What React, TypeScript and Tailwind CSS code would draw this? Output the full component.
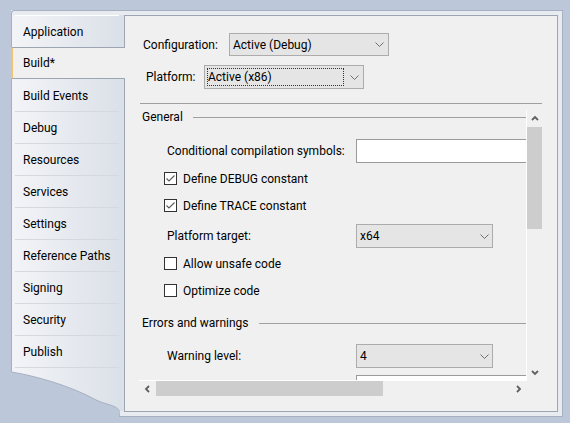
import React from 'react';

const tabs = [
  'Application',
  'Build*',
  'Build Events',
  'Debug',
  'Resources',
  'Services',
  'Settings',
  'Reference Paths',
  'Signing',
  'Security',
  'Publish',
];

function DropChevron() {
  return (
    <svg width="9" height="5" viewBox="0 0 9 5" className="shrink-0">
      <path d="M0.5 0.5 L4.5 4.5 L8.5 0.5" fill="none" stroke="#707070" strokeWidth="1" />
    </svg>
  );
}

function ArrowIcon({ dir }: { dir: 'up' | 'down' | 'left' | 'right' }) {
  const d = {
    up: 'M1 5 L4 2 L7 5',
    down: 'M1 2 L4 5 L7 2',
    left: 'M5 1 L2 4 L5 7',
    right: 'M2 1 L5 4 L2 7',
  }[dir];
  const vertical = dir === 'up' || dir === 'down';
  return (
    <svg
      width={vertical ? 8 : 7}
      height={vertical ? 7 : 8}
      viewBox={vertical ? '0 0 8 7' : '0 0 7 8'}
    >
      <path d={d} fill="none" stroke="#606060" strokeWidth="1.8" />
    </svg>
  );
}

function Check({ checked, label }: { checked?: boolean; label: string }) {
  return (
    <div className="flex h-[27px] items-center pl-[25px]">
      <div className="flex h-[13px] w-[13px] items-center justify-center border border-[#333333] bg-white">
        {checked && (
          <svg width="11" height="11" viewBox="0 0 11 11">
            <path d="M1.5 5.5 L4 8 L9.5 2.5" fill="none" stroke="#5a5a5a" strokeWidth="1.1" />
          </svg>
        )}
      </div>
      <span className="ml-[6px]">{label}</span>
    </div>
  );
}

function Header({ text }: { text: string }) {
  return (
    <div className="flex h-[14px] items-center pl-[3px] leading-[14px]">
      <span>{text}</span>
      <div className="ml-[10px] h-px flex-1 bg-[#A0A0A0]" />
    </div>
  );
}

function Field({ label, children }: { label: string; children: React.ReactNode }) {
  return (
    <div className="flex h-[24px] items-center pl-[28px]">
      <span className="w-[189px] shrink-0">{label}</span>
      {children}
    </div>
  );
}

function Combo({ value }: { value: string }) {
  return (
    <div className="flex h-[24px] w-[137px] shrink-0 items-center justify-between border border-[#ACACAC] bg-[#E5E5E5] pl-[3px] pr-[3px]">
      <span>{value}</span>
      <DropChevron />
    </div>
  );
}

function TabStrip() {
  return (
    <div className="flex w-[114px] flex-col">
      <div className="flex flex-col bg-gradient-to-r from-[#F3F4F7] to-[#DAE0E8]">
        <div className="h-[5px] rounded-tl-[3px] border-l border-t border-[#A6B0C0] bg-[#E8EBF0]" />
        {tabs.map((t, i) => {
          if (t === 'Build*') {
            return (
              <div
                key={t}
                className="flex h-[32px] items-center border-b border-l-2 border-t border-[#9DA5B2] border-l-[#F2C46D] bg-[#F0F0F0] pl-[10px]"
              >
                {t}
              </div>
            );
          }
          return (
            <div
              key={t}
              className="flex h-[32px] flex-col border-l border-r border-l-[#A6B0C0] border-r-[#9DA5B2]"
            >
              {i === 0 ? (
                <div className="ml-[3px] mr-[5px] h-px bg-white" />
              ) : i === 2 ? (
                <div className="h-px" />
              ) : (
                <div className="ml-[3px] mr-[5px] h-px bg-[#D4D9E0]" />
              )}
              <div className="flex flex-1 items-center pl-[11px]">{t}</div>
            </div>
          );
        })}
        <div className="h-px border-l border-r border-l-[#A6B0C0] border-r-[#9DA5B2]">
          <div className="ml-[3px] mr-[5px] h-px bg-[#D4D9E0]" />
        </div>
      </div>
      <svg width="114" height="49" viewBox="0 0 114 49" className="block">
        <defs>
          <linearGradient id="tabgrad" x1="0" x2="1" y1="0" y2="0">
            <stop offset="0" stopColor="#F3F4F7" />
            <stop offset="1" stopColor="#DAE0E8" />
          </linearGradient>
        </defs>
        <path
          d="M0 0 L0 4 C25 8 60 18 85 32 C96 37 104 37 107.5 42 L108 49 L114 49 L114 0 Z"
          fill="url(#tabgrad)"
        />
        <rect x="108" y="43" width="6" height="6" fill="#E8EBF0" />
        <path
          d="M0.5 0 L0.5 4 C25 8 60 18 85 32 C96 37 104 37 108 42 L108.5 49"
          fill="none"
          stroke="#A6B0C0"
          strokeWidth="1"
        />
        <line x1="108" y1="48.5" x2="114" y2="48.5" stroke="#A6B0C0" strokeWidth="1" />
        <line x1="113.5" y1="0" x2="113.5" y2="43.5" stroke="#9DA5B2" strokeWidth="1" />
        <line x1="113" y1="43.5" x2="114" y2="43.5" stroke="#9DA5B2" strokeWidth="1" />
      </svg>
    </div>
  );
}

function ScrollArea() {
  return (
    <div className="ml-[14px] mt-[6px] flex w-[403px] flex-col">
      <div className="flex h-[271px]">
        <div className="flex h-[271px] w-[388px] flex-col overflow-hidden border-b border-r border-white">
          <Header text="General" />
          <div className="mt-[15px]">
            <Field label="Conditional compilation symbols:">
              <div className="h-[24px] w-[200px] shrink-0 border border-[#9A9A9A] bg-white" />
            </Field>
          </div>
          <div className="mt-[2px]">
            <Check checked label="Define DEBUG constant" />
            <Check checked label="Define TRACE constant" />
          </div>
          <div className="mt-[5px]">
            <Field label="Platform target:">
              <Combo value="x64" />
            </Field>
          </div>
          <div className="mt-[2px]">
            <Check label="Allow unsafe code" />
            <Check label="Optimize code" />
          </div>
          <div className="mt-[12px]">
            <Header text="Errors and warnings" />
          </div>
          <div className="mt-[14px]">
            <Field label="Warning level:">
              <Combo value="4" />
            </Field>
          </div>
          <div className="mt-[7px] pl-[217px]">
            <div className="h-[24px] w-[200px] border border-[#9A9A9A] bg-white" />
          </div>
        </div>
        <div className="flex w-[15px] flex-col">
          <div className="flex h-[17px] items-center justify-center">
            <ArrowIcon dir="up" />
          </div>
          <div className="h-[102px] bg-[#CDCDCD]" />
          <div className="flex-1" />
          <div className="flex h-[17px] items-center justify-center">
            <ArrowIcon dir="down" />
          </div>
        </div>
      </div>
      <div className="flex h-[15px] w-[388px]">
        <div className="flex w-[17px] items-center justify-center">
          <ArrowIcon dir="left" />
        </div>
        <div className="w-[227px] bg-[#CDCDCD]" />
        <div className="flex-1" />
        <div className="flex w-[17px] items-center justify-center">
          <ArrowIcon dir="right" />
        </div>
      </div>
    </div>
  );
}

export default function App() {
  return (
    <div
      className="h-[423px] w-[570px] bg-[#BCC7D9] pl-[11px] pt-[10px] text-[12px] text-black"
      style={{ fontFamily: 'Roboto, "Noto Sans", sans-serif' }}
    >
      <div className="flex h-[407px] w-[552px]">
        <TabStrip />
        <div className="flex w-[438px] flex-col border-b border-r border-t border-[#A6B0C0] bg-[#E8EBF0] pb-[4px] pr-[4px] pt-[4px]">
          <div className="flex flex-1 flex-col border-b border-r border-t border-[#9DA5B2] bg-[#F0F0F0]">
            <div className="mt-[17px] flex h-[23px] items-center pl-[18px]">
              <span className="w-[86px] shrink-0">Configuration:</span>
              <div className="flex h-[23px] w-[160px] items-center justify-between border border-[#ACACAC] bg-[#E5E5E5] pl-[3px] pr-[4px]">
                <span>Active (Debug)</span>
                <DropChevron />
              </div>
            </div>
            <div className="mt-[9px] flex h-[24px] items-center pl-[21px]">
              <span className="w-[58px] shrink-0">Platform:</span>
              <div className="flex h-[24px] w-[160px] items-center border border-[#ACACAC] bg-[#E5E5E5] p-[2px] pr-[4px]">
                <div className="flex h-full w-[137px] items-center border border-dotted border-[#333333]">
                  <span>Active (x86)</span>
                </div>
                <div className="flex-1" />
                <DropChevron />
              </div>
            </div>
            <div className="ml-[15px] mr-[15px] mt-[14px] h-px bg-[#A0A0A0]" />
            <ScrollArea />
          </div>
        </div>
      </div>
    </div>
  );
}
